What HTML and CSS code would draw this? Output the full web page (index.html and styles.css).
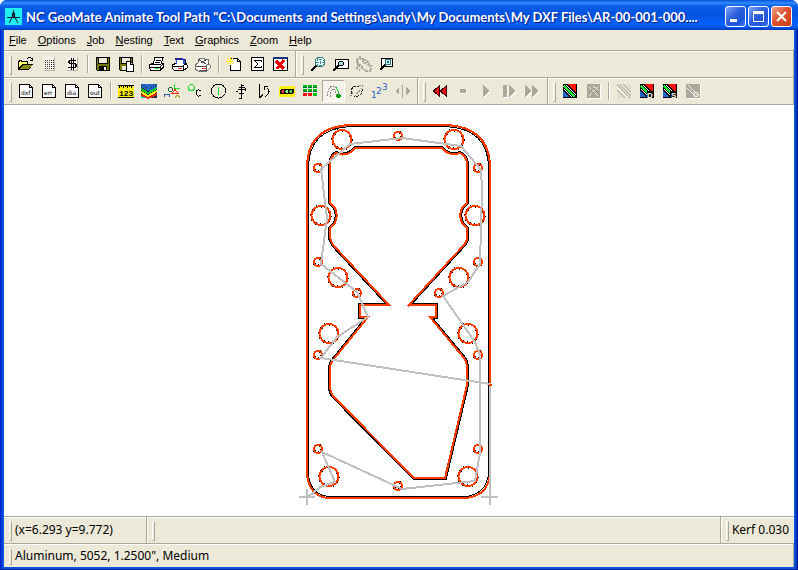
FILE: index.html
```html
<!DOCTYPE html>
<html lang="en">
<head>
<meta charset="utf-8">
<title>NC GeoMate Animate Tool Path</title>
<link rel="stylesheet" href="styles.css">
</head>
<body>
<div class="window">
  <header class="titlebar">
    <svg class="app-icon" viewBox="0 0 16 16"><rect width="16" height="16" fill="#1fefef"/><path d="M8 2v4M8 6L4 14M8 6l4 8M2 9h12M7 5h2v3H7z" stroke="#123" fill="none" stroke-width="1"/></svg>
    <h1 class="title">NC GeoMate Animate Tool Path "C:\Documents and Settings\andy\My Documents\My DXF Files\AR-00-001-000....</h1>
    <div class="caption-buttons">
      <button class="caption" aria-label="Minimize"><svg viewBox="0 0 19 19"><path d="M4 12h7v3H4z" fill="#fff"/></svg></button>
      <button class="caption" aria-label="Maximize"><svg viewBox="0 0 19 19"><path d="M4 4h11v11H4zM5 7v7h9V7z" fill="#fff" fill-rule="evenodd"/></svg></button>
      <button class="caption close" aria-label="Close"><svg viewBox="0 0 19 19"><path d="M5 5l9 9M14 5l-9 9" stroke="#fff" stroke-width="2.2"/></svg></button>
    </div>
  </header>

  <nav class="menubar">
    <button><u>F</u>ile</button><button><u>O</u>ptions</button><button><u>J</u>ob</button><button><u>N</u>esting</button><button><u>T</u>ext</button><button><u>G</u>raphics</button><button><u>Z</u>oom</button><button><u>H</u>elp</button>
  </nav>

  <div class="toolbar">
    <div class="band">
      <button class="tool" aria-label="Open"><svg viewBox="0 0 16 16"><path d="M0 5h1V4h3v1h6v3h5L11 14H0z" fill="#000"/><path d="M1 6h1V5h1v1h6v2H4l-3 4z" fill="#ff6"/><path d="M5 9h9l-3 4H2z" fill="#8a8a10"/><path d="M9 2.500h1M10 1.500h3M13 2.500h1M12 4.500h3M14.500 2v3" fill="none" stroke="#000"/></svg></button>
      <button class="tool" aria-label="Calculator"><svg viewBox="0 0 16 16"><path d="M3 1h11v14H3z" fill="#f6f4ea"/><path d="M13 1h1v14H3v-1h10z" fill="#b8b4a2"/><path d="M4 4.500h9M4 6.500h9M4 8.500h9M4 10.500h9M4 12.500h9" stroke="#333" stroke-dasharray="1 1"/></svg></button>
      <button class="tool" aria-label="Cost"><svg viewBox="0 0 16 16"><path d="M3 1h11v14H3z" fill="#f6f4ea"/><path d="M13 1h1v14H3v-1h10z" fill="#b8b4a2"/><path d="M7 2h1v12H7zM9 2h1v12H9zM5 4h7v1H5zM4 5h2v2H4zM5 7h7v1H5zM11 8h2v3h-2zM4 11h8v1H4z" fill="#000"/></svg></button>
      <span class="sep"></span>
      <button class="tool" aria-label="Save"><svg viewBox="0 0 16 16"><path d="M1 1h14v14H2l-1-1z" fill="#000"/><path d="M2 2h1v6h10V2h1v12h-2v-4H4v4H2z" fill="#77770c"/><path d="M4 2h8v5H4z" fill="#ece9d8"/><path d="M9 11h2v3H9z" fill="#fff"/></svg></button>
      <button class="tool" aria-label="Save as"><svg viewBox="0 0 16 16"><path d="M1 1h14v14H2l-1-1z" fill="#000"/><path d="M2 2h1v6h10V2h1v12H2z" fill="#77770c"/><path d="M4 2h8v5H4zM4 10h4v4H4z" fill="#ece9d8"/><path d="M8.500 5.500h4l3 3v7h-7z" fill="#fff" stroke="#000"/><path d="M12.500 5v3.500H16" stroke="#000" fill="none"/></svg></button>
      <span class="sep"></span>
      <button class="tool" aria-label="Print"><svg viewBox="0 0 16 16"><path d="M4.500 7l1.500-5.500h8L12.500 7l2 1v3l-3 3h-10l-1-2V9l3-2z" fill="#fff" stroke="#000"/><path d="M7 4h5M6 6h5M2 8.500h10M1 11h10l4-4M11 11v3" stroke="#000" fill="none"/><path d="M6 12h4v1H6z" fill="#0e3"/></svg></button>
      <button class="tool" aria-label="Print setup"><svg viewBox="0 0 16 16"><path d="M5 7L4 3h9v5l2 1v3l-3 2H2l-2-2V9z" fill="#fff" stroke="#000"/><path d="M2 1.500h9v1h3v1H3z" fill="#229"/><path d="M11 4h2v4h-2zM4 4h1v4H4z" fill="#25c"/><path d="M1 10h10l4-3M11 10v4" stroke="#000" fill="none"/><path d="M6 12h4v1H6z" fill="#e22"/></svg></button>
      <button class="tool" aria-label="Print drawing"><svg viewBox="0 0 16 16"><path d="M3 7l2-5 9 2-1 4 2 1v3l-3 3H3l-3-2V9z" fill="#fff" stroke="#777"/><path d="M3 3l8 5M6 7l6-4M1 10h10l3-3M11 10v4H4" stroke="#555" fill="none"/><path d="M7 12h4v1H7z" fill="#e22"/></svg></button>
      <span class="sep"></span>
      <button class="tool" aria-label="New"><svg viewBox="0 0 16 16"><path d="M4.500 2.500h7l3 3v9h-10z" fill="#fff" stroke="#000"/><path d="M11.500 2v3.500H15" stroke="#000" fill="none"/><path d="M0 5h8M4 1v8M1 2l6 6M7 2L1 8" stroke="#fe2"/></svg></button>
      <button class="tool" aria-label="Totals"><svg viewBox="0 0 16 16"><path d="M2.500 1.500h12v13h-12z" fill="#fff" stroke="#000"/><path d="M12 6V4.500H5.500L9 8l-3.500 3.500H12V10" stroke="#000" fill="none"/></svg></button>
      <button class="tool" aria-label="Delete"><svg viewBox="0 0 16 16"><path d="M1.500 1.500h14v13h-14z" fill="#fff" stroke="#000"/><path d="M1 1h15v2H1z" fill="#137"/><path d="M4 5l8 8M12 4l-7 9" stroke="#e00" stroke-width="3"/></svg></button>
    </div>
    <div class="band last">
      <button class="tool" aria-label="Zoom extents"><svg viewBox="0 0 16 16"><path d="M1 15l5-5" stroke="#000" stroke-width="2.500"/><circle cx="10" cy="6" r="5" fill="#dff" stroke="#377"/><path d="M6 6h8M7 3h6M7 9h6M10 1v10M7 2v8M13 2v8" stroke="#488" stroke-dasharray="1 1"/></svg></button>
      <button class="tool" aria-label="Zoom window"><svg viewBox="0 0 16 16"><path d="M2.500 3.500h13v9h-13z" fill="#fff" stroke="#000"/><path d="M0 15l6-6" stroke="#000" stroke-width="2"/><circle cx="8" cy="7.500" r="2.500" fill="#9dd" stroke="#000"/></svg></button>
      <button class="tool" aria-label="Pan" disabled><svg viewBox="0 0 16 16"><path d="M1 4l3-3 4 3 3 1 4 5v5h-5L2 9zM4 2l5 6M1 6l6 6M8 3l6 8M3 9l-2 3 3 2" fill="none" stroke="#aca899" stroke-width="2" stroke-dasharray="2 1"/></svg></button>
      <button class="tool" aria-label="Zoom previous"><svg viewBox="0 0 16 16"><path d="M2.500 2.500h11v8h-11z" fill="#fff" stroke="#000"/><path d="M1 14l5-5" stroke="#000" stroke-width="2.500"/><circle cx="9" cy="6" r="3" fill="#bee" stroke="#377"/><path d="M8 5h2v2H8z" fill="#377"/></svg></button>
    </div>
  </div>

  <div class="toolbar">
    <div class="band">
      <button class="tool" aria-label="DXF file"><svg viewBox="0 0 16 16"><path d="M1.500 1.500h10l3 3v10h-13z" fill="#fff" stroke="#000"/><path d="M11.500 1v3.500H15" stroke="#000" fill="none"/><text x="3" y="12">dxf</text></svg></button>
      <button class="tool" aria-label="Error file"><svg viewBox="0 0 16 16"><path d="M1.500 1.500h10l3 3v10h-13z" fill="#fff" stroke="#000"/><path d="M11.500 1v3.500H15" stroke="#000" fill="none"/><text x="3" y="12">err</text></svg></button>
      <button class="tool" aria-label="Dialog file"><svg viewBox="0 0 16 16"><path d="M1.500 1.500h10l3 3v10h-13z" fill="#fff" stroke="#000"/><path d="M11.500 1v3.500H15" stroke="#000" fill="none"/><text x="3" y="12">dia</text></svg></button>
      <button class="tool" aria-label="Output file"><svg viewBox="0 0 16 16"><path d="M1.500 1.500h10l3 3v10h-13z" fill="#fff" stroke="#000"/><path d="M11.500 1v3.500H15" stroke="#000" fill="none"/><text x="3" y="12">out</text></svg></button>
      <span class="sep"></span>
      <button class="tool" aria-label="Measure"><svg viewBox="0 0 16 16"><path d="M0 2h16v13H0z" fill="#fe1"/><path d="M0 2h16v1H0zM1 3h1v2H1zM3 3h1v1H3zM5 3h1v2H5zM7 3h1v1H7zM9 3h1v2H9zM11 3h1v1h-1zM13 3h1v2h-1zM0 14h16v1H0z" fill="#000"/><text class="digits" x="1" y="13">123</text></svg></button>
      <button class="tool" aria-label="Layers"><svg viewBox="0 0 16 16"><path d="M0 1h16v14H0z" fill="#234"/><path d="M0 1h16L8 6z" fill="#26c"/><path d="M0 3l8 4 8-4" stroke="#26c" stroke-width="2" fill="none"/><path d="M0 6l7 4 9-5" stroke="#0c2" stroke-width="2" fill="none"/><path d="M0 9l7 4 9-5" stroke="#fe1" stroke-width="2" fill="none"/><path d="M0 12l7 3 9-4" stroke="#e21" stroke-width="2" fill="none"/><path d="M0 13l5 2H0z" fill="#0cc"/></svg></button>
      <button class="tool" aria-label="Shapes"><svg viewBox="0 0 16 16"><path d="M10.500 1v4.500H16" stroke="#1d2" fill="none"/><circle cx="6.500" cy="6.500" r="2" fill="none" stroke="#164"/><path d="M8 10.500l3-4 3 4z" stroke="#e21" fill="none"/><path d="M0 14c0-4 6-4 6 0" stroke="#35b" fill="none"/><path d="M11 15c0-3 5-3 5 0" stroke="#aa3" fill="none"/></svg></button>
      <button class="tool" aria-label="Circle and arc"><svg viewBox="0 0 16 16"><circle cx="4.500" cy="4.500" r="3" fill="none" stroke="#1d2"/><path d="M14 8c-2-2-5-1-5 2s3 4 5 2" fill="none" stroke="#000"/></svg></button>
      <button class="tool" aria-label="Start point"><svg viewBox="0 0 16 16"><circle cx="8.500" cy="8" r="7" fill="none" stroke="#000"/><path d="M8 4h1v8H8z" fill="#1d2"/></svg></button>
      <button class="tool" aria-label="Mirror"><svg viewBox="0 0 16 16"><path d="M8.500 1v14M6 15.500h3M5 6.500h7M6 4.500h6M12.500 5v3M3 8.500h2M6 10.500h5M9 2.500h2" fill="none" stroke="#000"/></svg></button>
      <button class="tool" aria-label="Rotate"><svg viewBox="0 0 16 16"><path d="M3.500 1v14M4 14.500l3-3M8 3.500h4M8.500 3v4M11 5c4 3 2 6-2 9" fill="none" stroke="#000"/></svg></button>
      <button class="tool" aria-label="Go no go"><svg viewBox="0 0 16 16"><rect y="3" x="0" width="16" height="11" rx="2" fill="#fe1"/><rect x="1" y="6" width="14" height="5" rx="2" fill="#111"/><circle cx="4" cy="8.500" r="1.500" fill="#e33"/><circle cx="8" cy="8.500" r="1.500" fill="#8f8"/><circle cx="12" cy="8.500" r="1.500" fill="#5c5"/></svg></button>
      <button class="tool" aria-label="Grid"><svg viewBox="0 0 16 16"><path d="M1 2h4v3H1zM6 2h4v3H6zM11 2h4v3h-4zM1 6h4v3H1zM6 6h4v3H6zM11 6h4v3h-4zM11 10h4v3h-4z" fill="#0b1"/><path d="M1 10h4v3H1zM6 10h4v3H6z" fill="#e11"/><path d="M1 4h4v1H1zM6 4h4v1H6zM11 4h4v1h-4zM1 8h4v1H1zM6 8h4v1H6zM11 8h4v1h-4z" fill="#064"/></svg></button>
      <button class="tool pressed" aria-label="Animate tool path" aria-pressed="true"><svg viewBox="0 0 16 16"><path d="M3 13c-1-5 2-10 5-10s5 4 6 8M6 14C5 9 7 6 8 6s3 3 4 7" fill="none" stroke="#888" stroke-dasharray="2 1"/><path d="M11 4l3 6" stroke="#0c2"/><circle cx="13.500" cy="13" r="2.200" fill="#090"/></svg></button>
      <button class="tool" aria-label="Reverse"><svg viewBox="0 0 16 16"><path d="M4 11C1 6 7 1 11 4M14 6c1 5-4 9-8 7" fill="none" stroke="#222" stroke-dasharray="3 1"/><path d="M4 9v3H1M11 2h3v3L6 14" fill="none" stroke="#888" stroke-dasharray="2 1"/></svg></button>
      <button class="tool" aria-label="Sequence"><svg viewBox="0 0 16 16"><text class="seq" x="0" y="15">1</text><text class="seq" x="5" y="11">2</text><text class="seq" x="11" y="7">3</text></svg></button>
      <button class="tool" aria-label="Split" disabled><svg viewBox="0 0 16 16"><path d="M5 4v8L1 8zM8 2h1v13H8zM12 4v8l4-4z" fill="#aca899"/></svg></button>
    </div>
    <div class="band">
      <button class="tool" aria-label="Rewind"><svg viewBox="0 0 16 16"><path d="M7.500 2.500v11l-6-5.500zM14.500 2.500v11L8.500 8z" fill="#e11" stroke="#300"/></svg></button>
      <button class="tool" aria-label="Stop" disabled><svg viewBox="0 0 16 16"><path d="M6 6h6v5H6z" fill="#fff"/><path d="M5 6h6v4H5z" fill="#aca899"/></svg></button>
      <button class="tool" aria-label="Play" disabled><svg viewBox="0 0 16 16"><path d="M6 3l6 6-6 6z" fill="#fff"/><path d="M5 2l6 6-6 6z" fill="#aca899"/></svg></button>
      <button class="tool" aria-label="Step" disabled><svg viewBox="0 0 16 16"><path d="M3 3h4v12H3zM9 3l6 6-6 6z" fill="#fff"/><path d="M2 2h4v12H2zM8 2l6 6-6 6z" fill="#aca899"/></svg></button>
      <button class="tool" aria-label="Fast forward" disabled><svg viewBox="0 0 16 16"><path d="M2 3l6 6-6 6zM9 3l6 6-6 6z" fill="#fff"/><path d="M1 2l6 6-6 6zM8 2l6 6-6 6z" fill="#aca899"/></svg></button>
    </div>
    <div class="band last">
      <button class="tool" aria-label="Cut path"><svg viewBox="0 0 16 16"><path d="M1 1h14v14H1z" fill="#000"/><path d="M5 1h9v9z" fill="#f11"/><path d="M1 8v6h6z" fill="#26c"/><path d="M2 3l11 11" stroke="#1e3" stroke-width="2"/><path d="M4 2l10 10M2 6l8 8" stroke="#fff"/></svg></button>
      <button class="tool" aria-label="Clear cut" disabled><svg viewBox="0 0 16 16"><path d="M3 2h13v14H3z" fill="#fff"/><path d="M2 1h13v14H2z" fill="#aca899"/><path d="M4 4l9 9M13 4l-9 9M8 3l5 4" stroke="#f4f2e8" stroke-dasharray="3 1"/></svg></button>
      <span class="sep"></span>
      <button class="tool" aria-label="Hatch" disabled><svg viewBox="0 0 16 16"><path d="M1 1h14v14H1z" fill="#e2dfce"/><path d="M1 2l13 13M1 7l8 8M7 1l8 8M3 1l12 12" stroke="#aca899"/><path d="M1 4l11 11" stroke="#fff"/></svg></button>
      <button class="tool" aria-label="Draw cut"><svg viewBox="0 0 16 16"><path d="M1 1h14v14H1z" fill="#000"/><path d="M5 1h9v9z" fill="#f11"/><path d="M1 8v6h6z" fill="#26c"/><path d="M2 3l11 11" stroke="#1e3" stroke-width="2"/><path d="M4 2l10 10M2 6l8 8" stroke="#fff"/><path d="M8 8h7v7H8z" fill="#000"/><text class="letter" x="8" y="15">D</text></svg></button>
      <button class="tool" aria-label="Show cut"><svg viewBox="0 0 16 16"><path d="M1 1h14v14H1z" fill="#000"/><path d="M5 1h9v9z" fill="#f11"/><path d="M1 8v6h6z" fill="#26c"/><path d="M2 3l11 11" stroke="#1e3" stroke-width="2"/><path d="M4 2l10 10M2 6l8 8" stroke="#fff"/><path d="M8 8h7v7H8z" fill="#000"/><text class="letter" x="9" y="15">S</text></svg></button>
      <button class="tool" aria-label="Group cut" disabled><svg viewBox="0 0 16 16"><path d="M2 2h14v14H2z" fill="#fff"/><path d="M1 1h14v14H1z" fill="#aca899"/><path d="M3 2l7 7M2 5l6 6" stroke="#f4f2e8"/><text class="letter" x="8" y="14">G</text></svg></button>
    </div>
  </div>

  <main class="canvas">
    <svg class="drawing" viewBox="4 105 790 411" role="img" aria-label="Part outline with tool path">
      <defs>
        <path id="pocket" d="M355 148H442A15 15 0 0 0 460 153Q467 156 467 166V203A15 15 0 0 0 467 228V238Q467 242 463 246L408 306L410 305H436V317H430L464 358Q467 362 467 368V385L445 478H414L333 396Q330 392 330 387V368Q330 364 333 360L368 317H360V305H389L334 246Q330 241 330 236V228A15 15 0 0 0 330 203V166Q330 156 336 153A15 15 0 0 0 355 148Z"/>
        <g id="holes">
          <circle cx="342" cy="139.500" r="9.500"/><circle cx="454" cy="139.500" r="9.500"/>
          <circle cx="321" cy="215.500" r="9.500"/><circle cx="475" cy="215.500" r="9.500"/>
          <circle cx="338" cy="277.500" r="9.500"/><circle cx="459" cy="277.500" r="9.500"/>
          <circle cx="329" cy="333.500" r="9.500"/><circle cx="468" cy="333.500" r="9.500"/>
          <circle cx="329" cy="476.500" r="9.500"/><circle cx="468" cy="476.500" r="9.500"/>
          <circle cx="398" cy="136" r="4"/><circle cx="318" cy="168" r="4"/><circle cx="478" cy="168" r="4"/>
          <circle cx="318" cy="262" r="4"/><circle cx="478" cy="262" r="4"/>
          <circle cx="357" cy="293" r="4"/><circle cx="439" cy="293" r="4"/>
          <circle cx="318" cy="355" r="4"/><circle cx="478" cy="355" r="4"/>
          <circle cx="318" cy="449" r="4"/><circle cx="478" cy="449" r="4"/><circle cx="398" cy="486" r="4"/>
        </g>
      </defs>
      <!-- part edges: the outer one lies inside its cut, the pocket's outside -->
      <path class="edge" d="M350 126.500H446Q488.500 129 488.500 168V474Q486 494 466 496.500H328Q310 494 308.500 474V168Q308.500 129 350 126.500Z"/>
      <use class="pocket-edge" href="#pocket"/>
      <use class="hole-edge" href="#holes"/>
      <!-- cuts -->
      <use class="cut pocket-cut" href="#pocket"/>
      <use class="cut" href="#holes"/>
      <path class="cut" d="M350 125H446Q490 127 490 168V474Q488 496 466 498H328Q309 496 307 474V168Q307 127 350 125Z"/>
      <!-- rapid moves -->
      <path class="rapid" d="M308 497L320 487L335 482L322 452L402 489L475 481L480 453V355L475 342L443 296L468 282L480 264L482 190L481 170L461 146L402 138L350 144L321 169L327 218L321 264L357 292L368 317L337 337L321 358L490 384V497M299 497H315M307 489V505M481 497H498M490 489V505"/>
      <path class="cut" d="M489 385h3"/>
    </svg>
  </main>

  <footer>
    <div class="status">
      <div class="band pos">(x=6.293 y=9.772)</div>
      <div class="band grow"></div>
      <div class="band last kerf">Kerf 0.030</div>
    </div>
    <div class="status"><div class="band last">Aluminum, 5052, 1.2500", Medium</div></div>
  </footer>
</div>
</body>
</html>
```
FILE: styles.css
```css
*, *::before { box-sizing: border-box; }
body { margin: 0; background: #fff; font-family: "Noto Sans", sans-serif; }
button { margin: 0; padding: 0; border: 0; background: none; color: #000; font: inherit; }

.window {
  display: flex;
  flex-direction: column;
  min-height: 100vh;
  padding: 0 4px 4px;
  border-radius: 7px 7px 0 0;
  background: linear-gradient(90deg, #0019cf, #0855dd 3px, #0855dd calc(100% - 3px), #00138c);
  box-shadow: inset 0 -2px 0 #001ea0;
}

.titlebar {
  display: flex;
  align-items: center;
  height: 30px;
  margin: 0 -4px;
  padding: 3px 6px 0 5px;
  border-radius: 7px 7px 0 0;
  background: linear-gradient(#0a50d8, #2f8bff 3px, #0a5fe8 6px, #0453e0 14px, #0562fa 24px, #0458ee 27px, #0038b5);
}
.app-icon { width: 17px; height: 17px; flex: none; }
.title {
  flex: 1;
  margin: 0 0 0 4px;
  overflow: hidden;
  color: #fff;
  font: bold 13px/20px Lato, sans-serif;
  text-shadow: 1px 1px 1px #0a1883;
  white-space: nowrap;
}
.caption-buttons { display: flex; gap: 2px; }
.caption {
  width: 21px;
  height: 21px;
  border: 1px solid #fff;
  border-radius: 3px;
  background: linear-gradient(135deg, #7da5f5, #2c5fdd 45%, #1f55d8 75%, #3b7cf0);
}
.caption svg { display: block; width: 19px; height: 19px; }
.close { background: linear-gradient(135deg, #f0a48c, #e0532f 45%, #c83c14); }

.menubar {
  display: flex;
  gap: 11px;
  height: 20px;
  padding: 0 5px;
  background: #ece9d8;
  font: 11px/18px "Liberation Sans", sans-serif;
}
.menubar button { display: block; height: 19px; }

.toolbar, .status {
  display: flex;
  height: 27px;
  padding: 0 0 0 1px;
  border-top: 1px solid #aca899;
  background: #ece9d8;
  box-shadow: inset 0 1px 0 #fff;
}
.band {
  display: flex;
  align-items: center;
  padding-right: 3px;
  border-right: 1px solid #aca899;
  box-shadow: 1px 0 0 #fff;
  margin-right: 1px;
}
.band::before {
  content: "";
  flex: none;
  align-self: stretch;
  width: 3px;
  margin: 4px 3px 2px 4px;
  border: 1px solid;
  border-color: #fff #aca899 #aca899 #fff;
}
.band.last { flex: 1; margin-right: 0; box-shadow: none; }
.tool {
  display: flex;
  align-items: center;
  width: 23px;
  height: 22px;
  padding: 0 4px 0 3px;
}
.tool svg { display: block; width: 16px; height: 16px; shape-rendering: crispEdges; }
.tool text { font: 6px "DejaVu Sans", sans-serif; }
.tool .digits { font: bold 8px "Liberation Mono", monospace; }
.tool .seq { font: 9px "DejaVu Sans", sans-serif; fill: #2a5fd0; }
.tool .letter { font: bold 8px "Liberation Sans", sans-serif; fill: #fff; }
.pressed {
  border: 1px solid;
  border-color: #aca899 #fff #fff #aca899;
  padding: 0 3px 0 2px;
  background: #f6f4ec;
}
.sep { width: 8px; height: 18px; background: linear-gradient(90deg, transparent 3px, #aca899 3px, #aca899 4px, #fff 4px, #fff 5px, transparent 5px); }

.canvas { flex: 1; display: flex; min-height: 0; border-top: 1px solid #aca899; background: #fff; }
.drawing { display: block; flex: 1; width: 100%; min-width: 0; fill: none; shape-rendering: crispEdges; }
.edge { stroke: #000; stroke-width: 1; }
.pocket-edge { stroke: #000; stroke-width: 4; }
.hole-edge { stroke: #000; stroke-width: 3; stroke-dasharray: 1 4; }
.cut { stroke: #ff3c00; stroke-width: 2; }
.pocket-cut { fill: #fff; }
.rapid { stroke: #c0c0c0; stroke-width: 2; }

.status { font-size: 12px; line-height: 20px; }
.pos { width: 18%; }
.grow { flex: 1; }
.status .kerf { flex: none; border: 0; padding-right: 5px; }
.status:last-child { height: 24px; }
```
